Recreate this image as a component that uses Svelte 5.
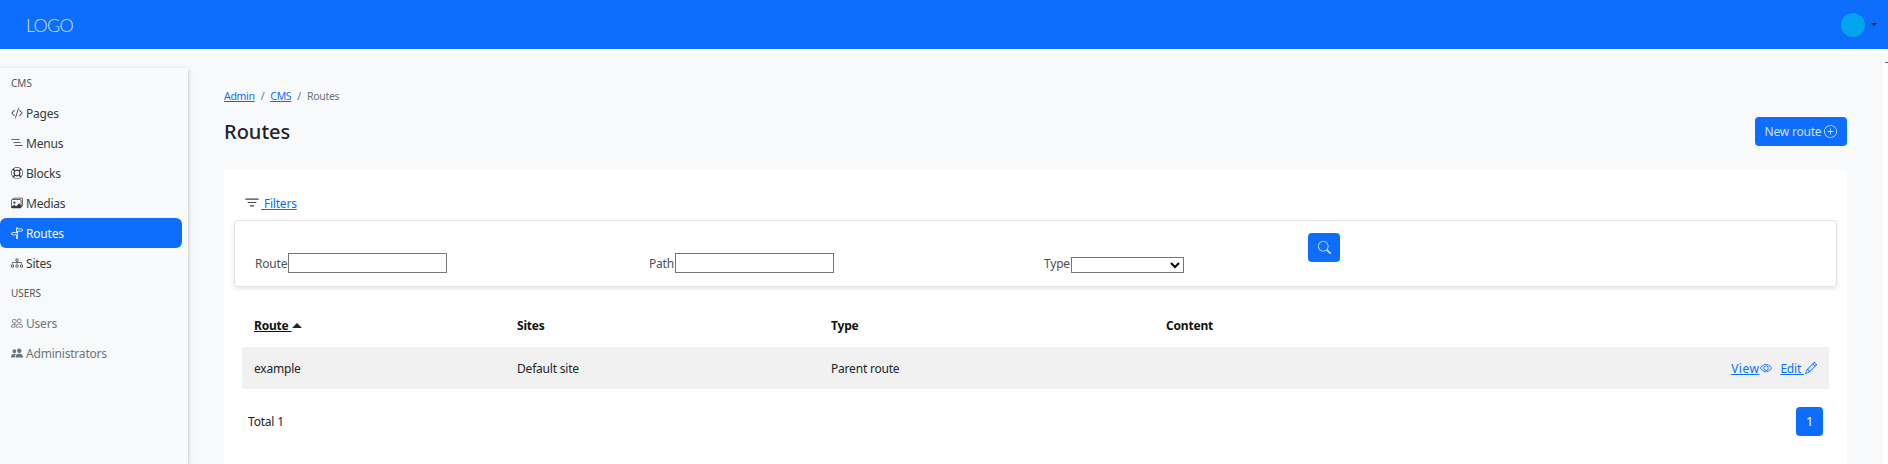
<script>
    const cms = [
        { label: 'Pages', paths: ['M10.478 1.647a.5.5 0 1 0-.956-.294l-4 13a.5.5 0 0 0 .956.294l4-13zM4.854 4.146a.5.5 0 0 1 0 .708L1.707 8l3.147 3.146a.5.5 0 0 1-.708.708l-3.5-3.5a.5.5 0 0 1 0-.708l3.5-3.5a.5.5 0 0 1 .708 0zm6.292 0a.5.5 0 0 0 0 .708L14.293 8l-3.147 3.146a.5.5 0 0 0 .708.708l3.5-3.5a.5.5 0 0 0 0-.708l-3.5-3.5a.5.5 0 0 0-.708 0z'] },
        { label: 'Menus', paths: ['M.5 3.5a.5.5 0 0 1 .5-.5h10a.5.5 0 0 1 0 1H1a.5.5 0 0 1-.5-.5zm2.5 4a.5.5 0 0 1 .5-.5h9a.5.5 0 0 1 0 1h-9a.5.5 0 0 1-.5-.5zm2 4a.5.5 0 0 1 .5-.5h10a.5.5 0 0 1 0 1h-10a.5.5 0 0 1-.5-.5z'] },
        { label: 'Blocks', paths: ['M8 0a8 8 0 1 0 0 16A8 8 0 0 0 8 0zm0 1a7 7 0 0 1 4.2 1.4L10.4 4.2a4 4 0 0 0-4.8 0L3.800 2.400A7 7 0 0 1 8 1zM2.400 3.800l1.800 1.800a4 4 0 0 0 0 4.800l-1.800 1.800a7 7 0 0 1 0-8.400zm11.200 0a7 7 0 0 1 0 8.400l-1.800-1.800a4 4 0 0 0 0-4.800l1.800-1.800zM8 5a3 3 0 1 1 0 6 3 3 0 0 1 0-6zm-2.400 6.800a4 4 0 0 0 4.800 0l1.800 1.800a7 7 0 0 1-8.400 0l1.800-1.800z'] },
        { label: 'Medias', paths: ['M4.502 9a1.5 1.5 0 1 0 0-3 1.5 1.5 0 0 0 0 3z', 'M14.002 13a2 2 0 0 1-2 2h-10a2 2 0 0 1-2-2V5A2 2 0 0 1 2 3a2 2 0 0 1 2-2h10a2 2 0 0 1 2 2v8a2 2 0 0 1-1.998 2zM14 2H4a1 1 0 0 0-1 1h9.002a2 2 0 0 1 2 2v7A1 1 0 0 0 15 11V3a1 1 0 0 0-1-1zM2.002 4a1 1 0 0 0-1 1v8l2.646-2.354a.5.5 0 0 1 .63-.062l2.66 1.773 3.71-3.71a.5.5 0 0 1 .577-.094l1.777 1.947V5a1 1 0 0 0-1-1h-10z'] },
        { label: 'Routes', active: true, paths: ['M7 7V1.414a1 1 0 0 1 2 0V2h5a1 1 0 0 1 .8.4l.975 1.3a.5.5 0 0 1 0 .6L14.8 5.6a1 1 0 0 1-.8.4H9v10H7v-5H2a1 1 0 0 1-.8-.4L.225 9.3a.5.5 0 0 1 0-.6L1.2 7.4A1 1 0 0 1 2 7h5zm1 3V8H2l-.75 1L2 10h6zm0-5h6l.75-1L14 3H8v2z'] },
        { label: 'Sites', paths: ['M6 3.5A1.5 1.5 0 0 1 7.5 2h1A1.5 1.5 0 0 1 10 3.5v1A1.5 1.5 0 0 1 8.5 6v1H14a.5.5 0 0 1 .5.5v1a.5.5 0 0 1-1 0V8h-5v.5a.5.5 0 0 1-1 0V8h-5v.5a.5.5 0 0 1-1 0v-1A.5.5 0 0 1 2 7h5.5V6A1.5 1.5 0 0 1 6 4.500v-1zM8.500 5a.5.5 0 0 0 .5-.5v-1a.5.5 0 0 0-.5-.5h-1a.5.5 0 0 0-.5.5v1a.5.5 0 0 0 .5.5h1zM0 11.500A1.500 1.500 0 0 1 1.500 10h1A1.500 1.500 0 0 1 4 11.500v1A1.500 1.500 0 0 1 2.500 14h-1A1.500 1.500 0 0 1 0 12.500v-1zm1.500-.5a.5.5 0 0 0-.5.5v1a.5.5 0 0 0 .5.5h1a.5.5 0 0 0 .5-.5v-1a.5.5 0 0 0-.5-.5h-1zm4.500.5A1.500 1.500 0 0 1 7.500 10h1a1.500 1.500 0 0 1 1.500 1.500v1A1.500 1.500 0 0 1 8.500 14h-1A1.500 1.500 0 0 1 6 12.500v-1zm1.500-.5a.5.5 0 0 0-.5.5v1a.5.5 0 0 0 .5.5h1a.5.5 0 0 0 .5-.5v-1a.5.5 0 0 0-.5-.5h-1zm4.500.5a1.500 1.500 0 0 1 1.500-1.500h1a1.500 1.500 0 0 1 1.500 1.500v1a1.500 1.500 0 0 1-1.500 1.500h-1a1.500 1.500 0 0 1-1.500-1.500v-1zm1.500-.5a.5.5 0 0 0-.5.5v1a.5.5 0 0 0 .5.5h1a.5.5 0 0 0 .5-.5v-1a.5.5 0 0 0-.5-.5h-1z'] }
    ];
    const users = [
        { label: 'Users', paths: ['M15 14s1 0 1-1-1-4-5-4-5 3-5 4 1 1 1 1h8zm-7.978-1A.261.261 0 0 1 7 12.996c.001-.264.167-1.03.76-1.72C8.312 10.629 9.282 10 11 10c1.717 0 2.687.63 3.24 1.276.593.69.758 1.457.76 1.72l-.008.002a.274.274 0 0 1-.014.002H7.022zM11 7a2 2 0 1 0 0-4 2 2 0 0 0 0 4zm3-2a3 3 0 1 1-6 0 3 3 0 0 1 6 0zM6.936 9.280a5.880 5.880 0 0 0-1.230-.247A7.350 7.350 0 0 0 5 9c-4 0-5 3-5 4 0 .667.333 1 1 1h4.216A2.238 2.238 0 0 1 5 13c0-1.010.377-2.042 1.090-2.904.243-.294.526-.569.846-.816zM4.920 10A5.493 5.493 0 0 0 4 13H1c0-.26.164-1.030.76-1.724.545-.636 1.492-1.256 3.160-1.275zM1.500 5.500a3 3 0 1 1 6 0 3 3 0 0 1-6 0zm3-2a2 2 0 1 0 0 4 2 2 0 0 0 0-4z'] },
        { label: 'Administrators', paths: ['M7 14s-1 0-1-1 1-4 5-4 5 3 5 4-1 1-1 1H7zm4-6a3 3 0 1 0 0-6 3 3 0 0 0 0 6zm-5.784 6A2.238 2.238 0 0 1 5 13c0-1.355.68-2.750 1.936-3.720A6.325 6.325 0 0 0 5 9c-4 0-5 3-5 4s1 1 1 1h4.216zM4.500 8a2.500 2.500 0 1 0 0-5 2.500 2.500 0 0 0 0 5z'] }
    ];
    const filter = 'M6 10.500a.5.5 0 0 1 .5-.5h3a.5.5 0 0 1 0 1h-3a.5.5 0 0 1-.5-.5zm-2-3a.5.5 0 0 1 .5-.5h7a.5.5 0 0 1 0 1h-7a.5.5 0 0 1-.5-.5zm-2-3a.5.5 0 0 1 .5-.5h11a.5.5 0 0 1 0 1h-11a.5.5 0 0 1-.5-.5z';
    const plus = ['M8 15A7 7 0 1 1 8 1a7 7 0 0 1 0 14zm0 1A8 8 0 1 0 8 0a8 8 0 0 0 0 16z', 'M8 4a.5.5 0 0 1 .5.5v3h3a.5.5 0 0 1 0 1h-3v3a.5.5 0 0 1-1 0v-3h-3a.5.5 0 0 1 0-1h3v-3A.5.5 0 0 1 8 4z'];
    const search = 'M11.742 10.344a6.500 6.500 0 1 0-1.397 1.398h-.001c.03.04.062.078.098.115l3.850 3.850a1 1 0 0 0 1.415-1.414l-3.850-3.850a1.007 1.007 0 0 0-.115-.1zM12 6.500a5.500 5.500 0 1 1-11 0 5.500 5.500 0 0 1 11 0z';
    const eye = ['M16 8s-3-5.500-8-5.500S0 8 0 8s3 5.500 8 5.500S16 8 16 8zM1.173 8a13.133 13.133 0 0 1 1.660-2.043C4.120 4.668 5.880 3.500 8 3.500c2.120 0 3.879 1.168 5.168 2.457A13.133 13.133 0 0 1 14.828 8c-.058.087-.122.183-.195.288-.335.48-.83 1.120-1.465 1.755C11.879 11.332 10.119 12.500 8 12.500c-2.120 0-3.879-1.168-5.168-2.457A13.134 13.134 0 0 1 1.172 8z', 'M8 5.500a2.500 2.500 0 1 0 0 5 2.500 2.500 0 0 0 0-5zM4.500 8a3.500 3.500 0 1 1 7 0 3.500 3.500 0 0 1-7 0z'];
    const pencil = 'M12.146.146a.5.5 0 0 1 .708 0l3 3a.5.5 0 0 1 0 .708l-10 10a.5.5 0 0 1-.168.11l-5 2a.5.5 0 0 1-.65-.65l2-5a.5.5 0 0 1 .11-.168l10-10zM11.207 2.500 13.500 4.793 14.793 3.500 12.500 1.207 11.207 2.500zm1.586 3L10.500 3.207 4 9.707V10h.5a.5.5 0 0 1 .5.5v.5h.5a.5.5 0 0 1 .5.5v.5h.293l6.500-6.500zm-9.761 5.175-.106.106-1.528 3.821 3.821-1.528.106-.106A.5.5 0 0 1 5 12.500V12h-.5a.5.5 0 0 1-.5-.5V11h-.5a.5.5 0 0 1-.468-.325z';
</script>

{#snippet icon(paths, size = 12)}
    <svg width={size} height={size} viewBox="0 0 16 16" fill="currentColor" aria-hidden="true">
        {#each [paths].flat() as d}<path {d} />{/each}
    </svg>
{/snippet}

<header class="topbar">
    <a class="logo" href="#top">LOGO</a>
    <div class="account">
        <span class="avatar"></span>
        <span class="caret"></span>
    </div>
</header>

<div class="layout">
    <aside class="sidebar">
        <p class="group">CMS</p>
        {#each cms as item}
            <a class="item" class:active={item.active} href="#top">{@render icon(item.paths)}<span>{item.label}</span></a>
        {/each}
        <p class="group">USERS</p>
        {#each users as item}
            <a class="item muted" href="#top">{@render icon(item.paths)}<span>{item.label}</span></a>
        {/each}
    </aside>

    <main class="main">
        <nav class="crumbs">
            <a href="#top">Admin</a><span class="sep">/</span><a href="#top">CMS</a><span class="sep">/</span><span class="current">Routes</span>
        </nav>
        <div class="heading">
            <h1>Routes</h1>
            <button class="btn new">New route {@render icon(plus, 13)}</button>
        </div>

        <section class="panel">
            <div class="filters-toggle">
                <span class="filter-icon">{@render icon(filter, 18)}</span>
                <a href="#top">&nbsp;Filters</a>
            </div>
            <form class="filters">
                <label class="field">Route<input type="text" class="text" /></label>
                <label class="field">Path<input type="text" class="text" /></label>
                <label class="field low">Type<select></select></label>
                <button type="button" class="btn find">{@render icon(search, 13)}</button>
            </form>

            <div class="row head">
                <div class="sort"><span class="sorted">Route&nbsp;</span><span class="arrow"></span></div>
                <div>Sites</div>
                <div>Type</div>
                <div>Content</div>
                <div></div>
            </div>
            <div class="row body">
                <div>example</div>
                <div>Default site</div>
                <div>Parent route</div>
                <div></div>
                <div class="actions">
                    <a href="#top" class="view">View</a><span class="action-icon">{@render icon(eye, 12)}</span>
                    <a href="#top" class="edit">Edit&nbsp;</a><span class="action-icon">{@render icon(pencil, 12)}</span>
                </div>
            </div>

            <div class="foot">
                <span>Total 1</span>
                <button class="btn page">1</button>
            </div>
        </section>
    </main>

    <div class="rail"><span class="rail-mark"></span></div>
</div>

<style>
    :global(body) {
        margin: 0;
        height: 464px;
        overflow: hidden;
        background: #fff;
        font-family: "Noto Sans", sans-serif;
        font-size: 12px;
        letter-spacing: -0.2px;
        color: #212529;
    }
    a {
        color: #0d6efd;
    }
    .topbar {
        height: 49px;
        background: #0d6efd;
        display: flex;
        align-items: center;
        justify-content: space-between;
        padding: 0 11px 0 26px;
    }
    .logo {
        color: rgba(255, 255, 255, 0.8);
        text-decoration: none;
        font-family: "Lato", sans-serif;
        font-weight: 300;
        font-size: 18px;
        letter-spacing: -0.8px;
    }
    .account {
        display: flex;
        align-items: center;
        gap: 6px;
    }
    .avatar {
        width: 24px;
        height: 24px;
        border-radius: 50%;
        background: #03a4ee;
    }
    .caret {
        border-top: 3px solid #212529;
        border-left: 3px solid transparent;
        border-right: 3px solid transparent;
    }
    .layout {
        margin-top: 4px;
        height: 411px;
        display: flex;
        background: #f8f9fa;
    }
    .sidebar {
        width: 188px;
        margin-top: 15px;
        flex: none;
        box-shadow: 0 2px 5px rgba(0, 0, 0, 0.25);
        background: #f8f9fa;
        padding-right: 6px;
        box-sizing: border-box;
    }
    .group {
        margin: 0;
        height: 30px;
        line-height: 30px;
        padding-left: 11px;
        font-size: 10px;
        letter-spacing: 0;
        color: #555;
    }
    .item {
        display: flex;
        align-items: center;
        gap: 3px;
        height: 30px;
        padding-left: 11px;
        border-radius: 6px;
        color: #343a40;
        text-decoration: none;
    }
    .item.active {
        background: #0d6efd;
        color: #fff;
    }
    .item.muted {
        color: #6c757d;
    }
    .main {
        flex: 1;
        padding: 0 36px;
        min-width: 0;
    }
    .crumbs {
        margin-top: 36px;
        height: 14px;
        line-height: 14px;
        font-size: 10.5px;
        letter-spacing: -0.3px;
        display: flex;
    }
    .sep {
        padding: 0 6px;
        color: #6c757d;
    }
    .current {
        color: #6c757d;
    }
    .heading {
        display: flex;
        justify-content: space-between;
        align-items: center;
        height: 30px;
        margin-top: 13px;
    }
    h1 {
        margin: 0;
        font-size: 20px;
        font-weight: 500;
        letter-spacing: 0;
        color: #212529;
    }
    .btn {
        background: #0d6efd;
        color: rgba(255, 255, 255, 0.8);
        border: none;
        border-radius: 4px;
        font: inherit;
        letter-spacing: inherit;
        display: inline-flex;
        align-items: center;
        justify-content: center;
        padding: 0;
    }
    .new {
        width: 92px;
        height: 29px;
        gap: 3px;
    }
    .panel {
        margin-top: 24px;
        background: #fff;
        height: 294px;
        padding: 0 10px;
    }
    .filters-toggle {
        display: flex;
        align-items: center;
        height: 50px;
        padding: 16px 0 0 9px;
        box-sizing: border-box;
    }
    .filter-icon {
        display: flex;
        color: #444;
    }
    .filters {
        height: 67px;
        box-sizing: border-box;
        border: 1px solid #dee2e6;
        border-radius: 4px;
        box-shadow: 0 2px 4px rgba(0, 0, 0, 0.1);
        display: grid;
        grid-template-columns: 394px 395px 264px auto;
        padding: 12px 0 0 20px;
    }
    .field {
        display: flex;
        align-items: flex-end;
        align-self: start;
        gap: 1px;
        margin-top: 20px;
        line-height: 18px;
        color: #495057;
    }
    .field.low {
        margin-top: 22px;
    }
    .text {
        width: 159px;
        height: 20px;
        box-sizing: border-box;
        border: 1px solid #767676;
        padding: 0;
        margin: 0;
        background: #fff;
    }
    select {
        width: 113px;
        height: 16px;
        box-sizing: border-box;
        border: 1px solid #767676;
        background: #fff;
        margin: 0;
    }
    .find {
        width: 32px;
        height: 29px;
    }
    .row {
        display: grid;
        grid-template-columns: 263px 314px 335px 278px 1fr;
        margin: 0 8px;
        padding: 0 12px;
        align-items: center;
    }
    .head {
        margin-top: 16px;
        height: 44px;
        font-weight: 700;
        color: #111;
    }
    .sort {
        display: flex;
        align-items: center;
    }
    .sorted {
        text-decoration: underline;
    }
    .arrow {
        margin-left: 1px;
        border-bottom: 5px solid #212529;
        border-left: 5px solid transparent;
        border-right: 5px solid transparent;
    }
    .body {
        height: 42px;
        background: #f1f1f1;
    }
    .actions {
        display: flex;
        justify-content: flex-end;
        align-items: center;
        color: #0d6efd;
    }
    .action-icon {
        display: flex;
        margin-left: 1px;
    }
    .view {
        letter-spacing: 0.5px;
    }
    .edit {
        margin-left: 8px;
    }
    .foot {
        display: flex;
        justify-content: space-between;
        align-items: center;
        margin: 18px 14px 0 14px;
    }
    .page {
        width: 27px;
        height: 29px;
        color: #fff;
    }
    .rail {
        width: 5px;
        flex: none;
        background: #fff;
        position: relative;
    }
    .rail-mark {
        position: absolute;
        right: 0;
        top: 9px;
        width: 3px;
        height: 1px;
        background: #666;
    }
</style>
